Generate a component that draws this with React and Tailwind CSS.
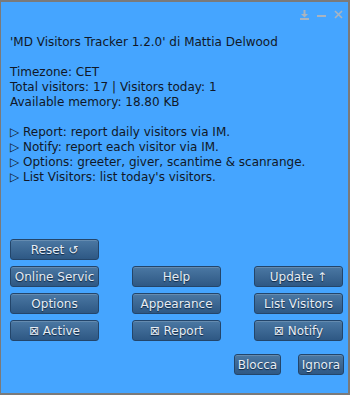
import React from 'react'

const font = { fontFamily: '"DejaVu Sans", Verdana, sans-serif' }

function Btn({ children, className = '' }) {
  return (
    <button
      className={`h-[21px] rounded-[3px] border border-[#23456a] bg-gradient-to-b from-[#4b78a3] to-[#2e5884] text-[12px] leading-none text-[#e6edf5] [text-shadow:0_1px_1px_#0f2640] shadow-[inset_0_1px_0_rgba(255,255,255,0.15)] overflow-hidden whitespace-nowrap flex items-center justify-center ${className}`}
    >
      {children}
    </button>
  )
}

const lines = [
  "'MD Visitors Tracker 1.2.0' di Mattia Delwood",
  '',
  'Timezone: CET',
  'Total visitors: 17 | Visitors today: 1',
  'Available memory: 18.80 KB',
  '',
  '▷ Report: report daily visitors via IM.',
  '▷ Notify: report each visitor via IM.',
  '▷ Options: greeter, giver, scantime & scanrange.',
  "▷ List Visitors: list today's visitors.",
]

export default function App() {
  return (
    <div
      style={font}
      className="w-[350px] h-[395px] bg-[#45a5ff] border-t-2 border-l border-r-2 border-b-2 border-[#7a7a7a] flex flex-col"
    >
      {/* title bar icons */}
      <div className="flex justify-end items-start gap-[8px] pr-[5px] pt-[8px] h-[33px]">
        <svg width="9" height="10" viewBox="0 0 9 10">
          <rect x="3.5" y="0" width="2" height="4" fill="#a9b4c0" />
          <path d="M1 4 H8 L4.5 7.5 Z" fill="#a9b4c0" />
          <rect x="0" y="8" width="9" height="2" fill="#a9b4c0" />
        </svg>
        <svg width="9" height="10" viewBox="0 0 9 10">
          <rect x="0" y="5" width="9" height="2" fill="#a9b4c0" />
        </svg>
        <svg width="9" height="10" viewBox="0 0 9 10">
          <path d="M1 1 L8 8 M8 1 L1 8" stroke="#a9b4c0" strokeWidth="1.6" />
        </svg>
      </div>

      {/* info text */}
      <div className="pl-[9px] text-[12px] leading-[15px] text-[#111827]">
        {lines.map((l, i) => (
          <div key={i} className="h-[15px] whitespace-nowrap">{l}</div>
        ))}
      </div>

      {/* buttons */}
      <div className="pl-[9px] mt-[54px] grid grid-cols-[89px_89px_89px] gap-x-[33px] gap-y-[6px]">
        <Btn>Reset ↺</Btn>
        <div />
        <div />
        <Btn>Online Servic</Btn>
        <Btn>Help</Btn>
        <Btn>Update ↑</Btn>
        <Btn>Options</Btn>
        <Btn>Appearance</Btn>
        <Btn>List Visitors</Btn>
        <Btn>⊠ Active</Btn>
        <Btn>⊠ Report</Btn>
        <Btn>⊠ Notify</Btn>
      </div>

      <div className="flex justify-end gap-[17px] pr-[4px] mt-[13px]">
        <Btn className="w-[47px]">Blocca</Btn>
        <Btn className="w-[46px]">Ignora</Btn>
      </div>
    </div>
  )
}
